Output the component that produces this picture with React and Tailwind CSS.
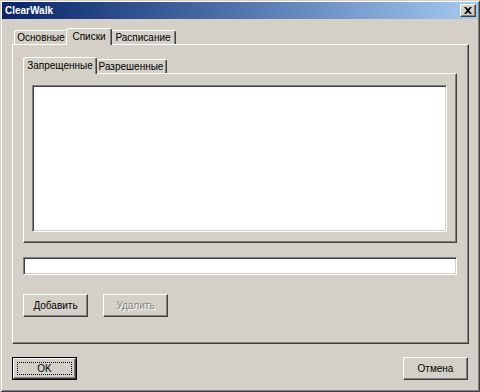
const font = "font-['Tahoma','Liberation_Sans',Arial,sans-serif]";

function Tab({ label, width, active }) {
  return (
    <div
      className={
        "relative flex justify-center whitespace-nowrap border-l border-t border-r border-white border-r-[#404040] rounded-t-[3px] bg-[#d4d0c8] shadow-[inset_-1px_0_#808080] text-[10px] leading-[12px] text-black " +
        (active ? "z-10 h-[17px] -mb-px -mx-[2px] pt-[2px]" : "h-[14px] pt-[1px]")
      }
      style={{ width: active ? width + 4 : width }}
    >
      {label}
    </div>
  );
}

function Button({ children, disabled, isDefault, className = '' }) {
  if (isDefault) {
    return (
      <div className={"h-[23px] w-[65px] border border-black " + className}>
        <div className="h-full w-full border border-t-white border-l-white border-r-[#404040] border-b-[#404040] shadow-[inset_-1px_-1px_#808080] p-[3px]">
          <div className="h-full w-full border border-dotted border-black flex items-center justify-center text-[10px] text-black">
            {children}
          </div>
        </div>
      </div>
    );
  }
  return (
    <div
      className={
        "h-[23px] w-[65px] flex items-center justify-center border border-t-white border-l-white border-r-[#404040] border-b-[#404040] shadow-[inset_-1px_-1px_#808080] text-[10px] " +
        (disabled ? "text-[#808080] [text-shadow:1px_1px_#fff] " : "text-black ") +
        className
      }
    >
      {children}
    </div>
  );
}

const sunken =
  "border border-t-[#808080] border-l-[#808080] border-r-white border-b-white shadow-[inset_1px_1px_#404040,inset_-1px_-1px_#d4d0c8] bg-white";

export default function App() {
  return (
    <div
      className={
        "w-[480px] h-[392px] bg-[#d4d0c8] p-[2px] flex flex-col shadow-[inset_1px_1px_#d4d0c8,inset_-1px_-1px_#404040,inset_2px_2px_#fff,inset_-2px_-2px_#808080] " +
        font
      }
    >
      {/* title bar */}
      <div className="h-[17px] flex items-center justify-between pl-[3px] pr-[2px] bg-gradient-to-r from-[#0a246a] to-[#a6caf0]">
        <span className="text-white text-[10px] font-bold leading-none">ClearWalk</span>
        <div className="w-[16px] h-[13px] bg-[#d4d0c8] border border-t-white border-l-white border-r-[#404040] border-b-[#404040] shadow-[inset_-1px_-1px_#808080] flex items-center justify-center">
          <svg width="8" height="7" viewBox="0 0 8 7">
            <path d="M0 0h2l2 2 2-2h2L5 3.5 8 7H6L4 5 2 7H0l3-3.5z" fill="#000" />
          </svg>
        </div>
      </div>

      <div className="flex-1 pl-[10px] pr-[9px]">
        {/* outer tabs */}
        <div className="mt-[9px] flex items-end pl-[2px]">
          <Tab label="Основные" width={54} />
          <Tab label="Списки" width={42} active />
          <Tab label="Расписание" width={66} />
        </div>
        <div className="h-[300px] border border-t-white border-l-white border-r-[#404040] border-b-[#404040] shadow-[inset_-1px_-1px_#808080] pl-[10px] pr-[11px] pt-[12px]">
          {/* inner tabs */}
          <div className="flex items-end pl-[2px]">
            <Tab label="Запрещенные" width={70} active />
            <Tab label="Разрешенные" width={72} />
          </div>
          <div className="h-[170px] flex border border-t-white border-l-white border-r-[#404040] border-b-[#404040] shadow-[inset_-1px_-1px_#808080] pl-[8px] pr-[9px] pt-[11px] pb-[10px]">
            <div className={"flex-1 " + sunken} />
          </div>
          <div className={"mt-[14px] h-[18px] " + sunken} />
          <div className="mt-[19px] flex gap-[15px]">
            <Button>Добавить</Button>
            <Button disabled>Удалить</Button>
          </div>
        </div>
        <div className="mt-[13px] flex justify-between pr-[1px]">
          <Button isDefault>OK</Button>
          <Button>Отмена</Button>
        </div>
      </div>
    </div>
  );
}
